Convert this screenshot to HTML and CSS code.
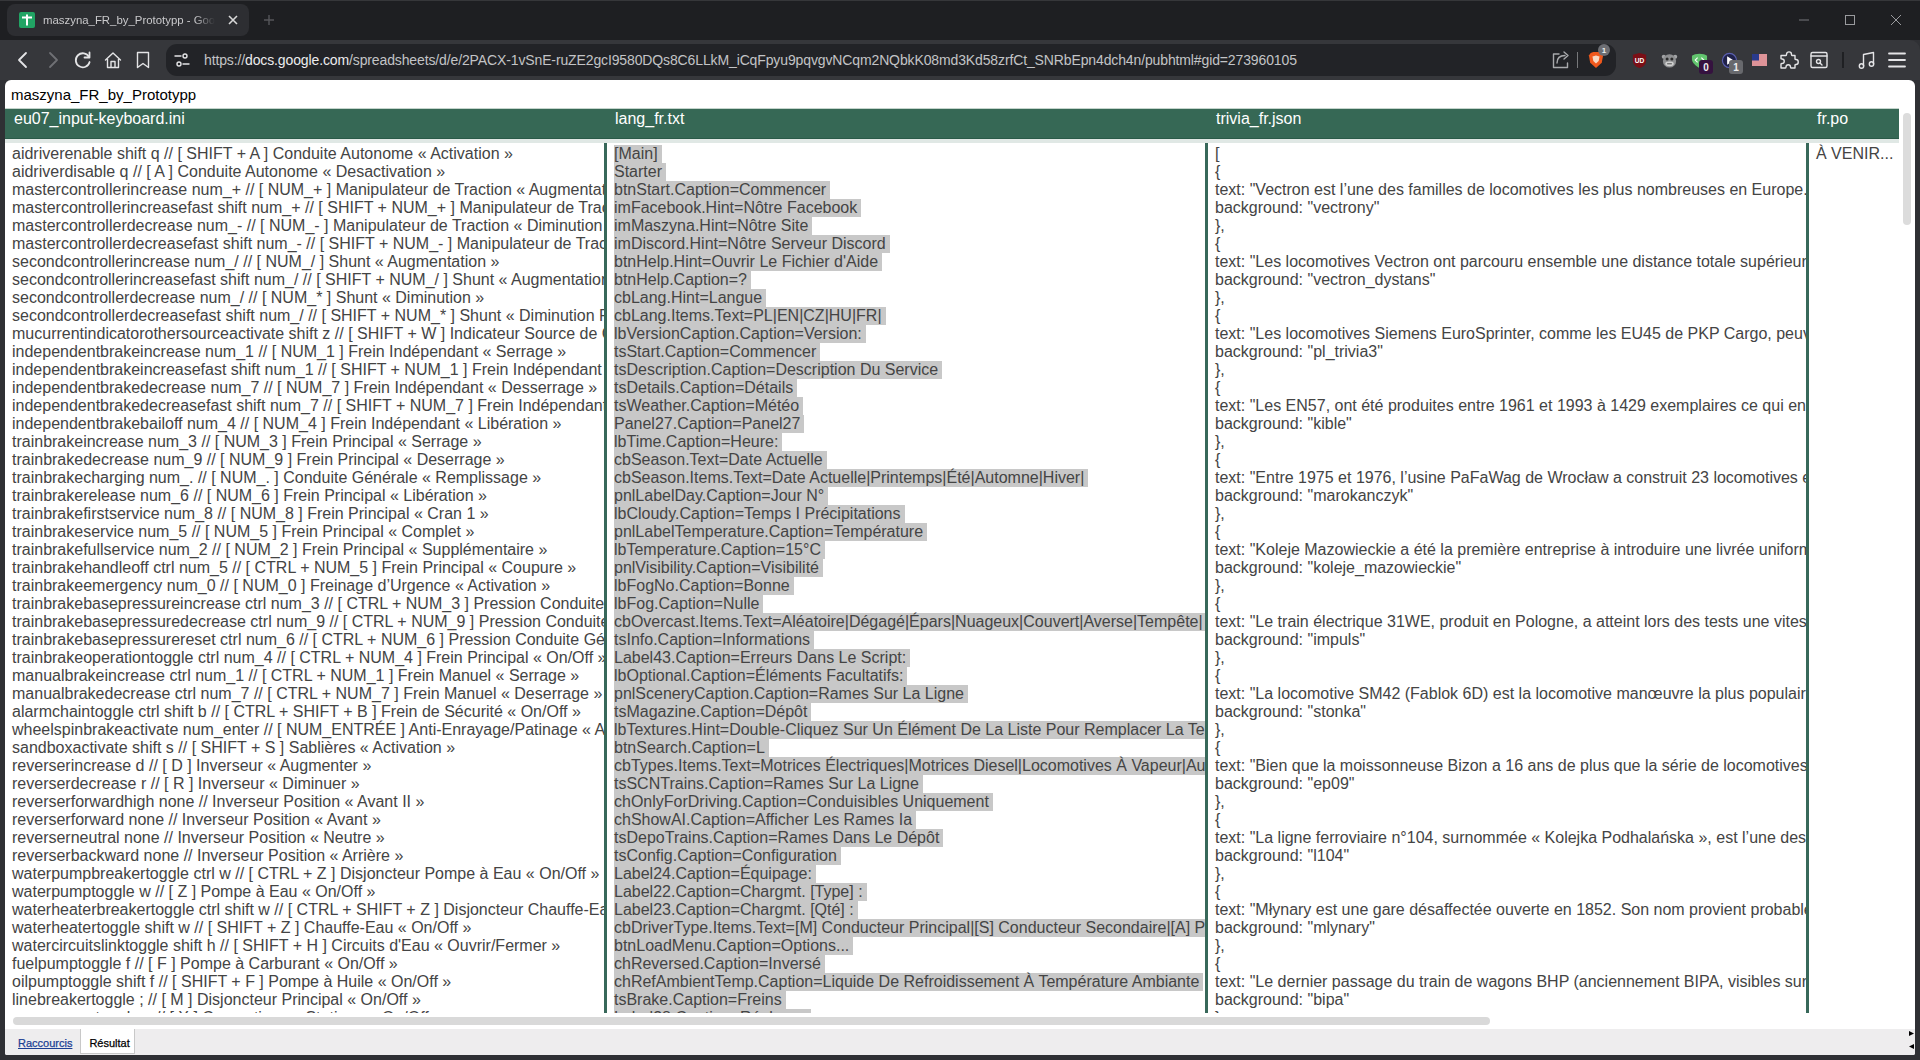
FILE: index.html
```html
<!DOCTYPE html>
<html lang="fr">
<head>
<meta charset="utf-8">
<title>maszyna_FR_by_Prototypp</title>
<link rel="stylesheet" href="styles.css">
</head>
<body>
<div class="tabstrip">
  <div class="tab">
    <svg class="favicon" viewBox="0 0 16 16"><rect width="16" height="16" rx="2" fill="#21a464"/><path d="M3 5.5h10M8 2.5v11" stroke="#fff" stroke-width="2" fill="none"/></svg>
    <span class="tab-title">maszyna_FR_by_Prototypp - Google Sheets</span>
    <svg class="tab-x" viewBox="0 0 12 12"><path d="M2 2l8 8M10 2l-8 8" stroke="#d8d8d8" stroke-width="1.6" fill="none"/></svg>
  </div>
  <svg class="tab-plus" viewBox="0 0 12 12"><path d="M6 1v10M1 6h10" stroke="#55565a" stroke-width="1.4" fill="none"/></svg>
  <div class="winbtns">
    <svg viewBox="0 0 12 12"><path d="M1 6h10" stroke="#77787c" fill="none"/></svg>
    <svg viewBox="0 0 12 12"><rect x="1.5" y="1.5" width="9" height="9" stroke="#9a9b9e" fill="none"/></svg>
    <svg viewBox="0 0 12 12"><path d="M1 1l10 10M11 1L1 11" stroke="#9a9b9e" fill="none"/></svg>
  </div>
</div>
<div class="toolbar">
  <div class="tb-btn"><svg viewBox="0 0 20 20"><path d="M13 3L6 10l7 7" class="ic"/></svg></div>
  <div class="tb-btn"><svg viewBox="0 0 20 20"><path d="M7 3l7 7-7 7" class="ic dim"/></svg></div>
  <div class="tb-btn"><svg viewBox="0 0 20 20"><path d="M16 7a7 7 0 1 0 .6 5" class="ic"/><path d="M16.5 2.5V7.500H11.500" class="ic"/></svg></div>
  <div class="tb-btn"><svg viewBox="0 0 20 20"><path d="M2.500 10L10 3l7.500 7M4.500 9v8.500h11V9M8 17.500V11.500h4v6" class="ic thin"/></svg></div>
  <div class="tb-btn"><svg viewBox="0 0 20 20"><path d="M4.500 2.500h11v15L10 13.500l-5.500 4z" class="ic thin"/></svg></div>
  <div class="address">
    <svg class="settings" viewBox="0 0 16 16"><path d="M1 4h6M9 12h6" class="ic thin"/><circle cx="11" cy="4" r="2" class="ic thin"/><circle cx="5" cy="12" r="2" class="ic thin"/></svg>
    <div class="url">https://<b>docs.google.com</b>/spreadsheets/d/e/2PACX-1vSnE-ruZE2gcI9580DQs8C6LLkM_iCqFpyu9pqvgvNCqm2NQbkK08md3Kd58zrfCt_SNRbEpn4dch4n/pubhtml#gid=273960105</div>
    <svg class="share" viewBox="0 0 18 18"><path d="M7 3H1.500v13.500h14V12" class="ic thin dimmer"/><path d="M5 12c0-5 3-7.500 8-7.500M12 1l4 3.500-4 3.500" class="ic thin dimmer"/></svg>
    <span class="addr-sep"></span>
    <div class="brave">
      <svg viewBox="0 0 18 20"><path d="M3 2l3-1h6l3 1 2 3-1.500 8L9 19 2.500 13 1 5z" fill="#f0581c"/><path d="M5 6l4-1 4 1-1 5-3 3-3-3z" fill="#f8d9c4"/></svg>
      <span class="badge badge-grey-round">1</span>
    </div>
  </div>
  <div class="tb-btn ext"><svg viewBox="0 0 18 18"><path d="M9 1l7 2v6c0 4-3 7-7 8-4-1-7-4-7-8V3z" fill="#7b0f16"/><text x="9" y="11.500" class="ub">UD</text></svg></div>
  <div class="tb-btn ext"><svg viewBox="0 0 18 18"><circle cx="3" cy="5" r="2.200" fill="#a3a4a6"/><circle cx="15" cy="5" r="2.200" fill="#a3a4a6"/><circle cx="9" cy="9.500" r="7" fill="#8f9092"/><circle cx="6.500" cy="7.500" r="1.600" fill="#2c2c2c"/><circle cx="11.500" cy="7.500" r="1.600" fill="#2c2c2c"/><ellipse cx="9" cy="12.500" rx="4.500" ry="2.500" fill="#d0d0d0"/><path d="M6.500 12.500h5" stroke="#444" stroke-width="1"/></svg></div>
  <div class="tb-btn ext">
    <svg viewBox="0 0 18 18"><path d="M1 4c3-3 13-3 16 0v4c0 3-4 7-8 9-4-2-8-6-8-9z" fill="#62c56e"/><path d="M7 6L4.500 8.500 7 11M11 6l2.500 2.500L11 11" stroke="#fff" stroke-width="1.200" fill="none"/></svg>
    <span class="badge badge-purple">0</span>
  </div>
  <div class="tb-btn ext">
    <svg viewBox="0 0 18 18"><circle cx="9" cy="9" r="7.500" fill="#20224a" stroke="#5b60b0" stroke-width="1.200"/><path d="M6.500 4.500l7 4.500-7 4.500z" fill="#fff"/></svg>
    <span class="badge badge-grey">1</span>
  </div>
  <div class="tb-btn ext"><svg class="flag" viewBox="0 0 15 12"><rect width="15" height="12" fill="#f4f4f4"/><path d="M0 1h15M0 3h15M0 5h15M0 7h15M0 9h15M0 11h15" stroke="#c8323c"/><rect width="7" height="6.500" fill="#2a3a8c"/></svg></div>
  <div class="tb-btn"><svg viewBox="0 0 20 20"><path d="M7.500 4.500c0-3.500 5-3.500 5 0 0 .5 0 1 .5 1h3v3.500c0 .5.500.5 1 .5 3 0 3 5 0 5-.5 0-1 0-1 .5v3h-4c-.5 0-.5-.5-.5-1 0-3-4.500-3-4.500 0 0 .5 0 1-.5 1H2v-4c0-.5.500-.5 1-.5 3 0 3-4.500 0-4.500-.5 0-1 0-1-.5V5.500h5c.5 0 .5-.5.500-1z" class="ic thin"/></svg></div>
  <div class="tb-btn"><svg viewBox="0 0 20 20"><rect x="2" y="2.500" width="16" height="15" rx="1.500" class="ic thin"/><path d="M2 6h16" class="ic thin"/><circle cx="9.500" cy="11.500" r="2" class="ic thin"/><path d="M11 13l2 2" class="ic thin"/></svg></div>
  <span class="tb-sep"></span>
  <div class="tb-btn"><svg viewBox="0 0 20 20"><path d="M6.500 16V4.500l10-2V14" class="ic thin"/><circle cx="4.500" cy="16" r="2.200" class="ic thin"/><circle cx="14.500" cy="14" r="2.200" class="ic thin"/></svg></div>
  <div class="tb-btn"><svg viewBox="0 0 20 20"><path d="M2 3.500h16M2 10h16M2 16.500h16" class="ic"/></svg></div>
</div>
<main class="page">
  <div class="doc-title">maszyna_FR_by_Prototypp</div>
  <div class="sheet">
    <div class="grid head">
      <div class="hcell">eu07_input-keyboard.ini</div>
      <div class="hcell">lang_fr.txt</div>
      <div class="hcell">trivia_fr.json</div>
      <div class="hcell">fr.po</div>
    </div>
    <div class="strip"></div>
    <div class="grid body">
      <div class="cell first">
        <div>aidriverenable shift q // [ SHIFT + A ] Conduite Autonome « Activation »</div>
        <div>aidriverdisable q // [ A ] Conduite Autonome « Desactivation »</div>
        <div>mastercontrollerincrease num_+ // [ NUM_+ ] Manipulateur de Traction « Augmentation »</div>
        <div>mastercontrollerincreasefast shift num_+ // [ SHIFT + NUM_+ ] Manipulateur de Traction « Augmentation Rapide »</div>
        <div>mastercontrollerdecrease num_- // [ NUM_- ] Manipulateur de Traction « Diminution »</div>
        <div>mastercontrollerdecreasefast shift num_- // [ SHIFT + NUM_- ] Manipulateur de Traction « Diminution Rapide »</div>
        <div>secondcontrollerincrease num_/ // [ NUM_/ ] Shunt « Augmentation »</div>
        <div>secondcontrollerincreasefast shift num_/ // [ SHIFT + NUM_/ ] Shunt « Augmentation Rapide »</div>
        <div>secondcontrollerdecrease num_/ // [ NUM_* ] Shunt « Diminution »</div>
        <div>secondcontrollerdecreasefast shift num_/ // [ SHIFT + NUM_* ] Shunt « Diminution Rapide »</div>
        <div>mucurrentindicatorothersourceactivate shift z // [ SHIFT + W ] Indicateur Source de Courant</div>
        <div>independentbrakeincrease num_1 // [ NUM_1 ] Frein Indépendant « Serrage »</div>
        <div>independentbrakeincreasefast shift num_1 // [ SHIFT + NUM_1 ] Frein Indépendant « Serrage Rapide »</div>
        <div>independentbrakedecrease num_7 // [ NUM_7 ] Frein Indépendant « Desserrage »</div>
        <div>independentbrakedecreasefast shift num_7 // [ SHIFT + NUM_7 ] Frein Indépendant « Desserrage Rapide »</div>
        <div>independentbrakebailoff num_4 // [ NUM_4 ] Frein Indépendant « Libération »</div>
        <div>trainbrakeincrease num_3 // [ NUM_3 ] Frein Principal « Serrage »</div>
        <div>trainbrakedecrease num_9 // [ NUM_9 ] Frein Principal « Deserrage »</div>
        <div>trainbrakecharging num_. // [ NUM_. ] Conduite Générale « Remplissage »</div>
        <div>trainbrakerelease num_6 // [ NUM_6 ] Frein Principal « Libération »</div>
        <div>trainbrakefirstservice num_8 // [ NUM_8 ] Frein Principal « Cran 1 »</div>
        <div>trainbrakeservice num_5 // [ NUM_5 ] Frein Principal « Complet »</div>
        <div>trainbrakefullservice num_2 // [ NUM_2 ] Frein Principal « Supplémentaire »</div>
        <div>trainbrakehandleoff ctrl num_5 // [ CTRL + NUM_5 ] Frein Principal « Coupure »</div>
        <div>trainbrakeemergency num_0 // [ NUM_0 ] Freinage d’Urgence « Activation »</div>
        <div>trainbrakebasepressureincrease ctrl num_3 // [ CTRL + NUM_3 ] Pression Conduite Générale</div>
        <div>trainbrakebasepressuredecrease ctrl num_9 // [ CTRL + NUM_9 ] Pression Conduite Générale</div>
        <div>trainbrakebasepressurereset ctrl num_6 // [ CTRL + NUM_6 ] Pression Conduite Générale</div>
        <div>trainbrakeoperationtoggle ctrl num_4 // [ CTRL + NUM_4 ] Frein Principal « On/Off »</div>
        <div>manualbrakeincrease ctrl num_1 // [ CTRL + NUM_1 ] Frein Manuel « Serrage »</div>
        <div>manualbrakedecrease ctrl num_7 // [ CTRL + NUM_7 ] Frein Manuel « Deserrage »</div>
        <div>alarmchaintoggle ctrl shift b // [ CTRL + SHIFT + B ] Frein de Sécurité « On/Off »</div>
        <div>wheelspinbrakeactivate num_enter // [ NUM_ENTRÉE ] Anti-Enrayage/Patinage « Activation »</div>
        <div>sandboxactivate shift s // [ SHIFT + S ] Sablières « Activation »</div>
        <div>reverserincrease d // [ D ] Inverseur « Augmenter »</div>
        <div>reverserdecrease r // [ R ] Inverseur « Diminuer »</div>
        <div>reverserforwardhigh none // Inverseur Position « Avant II »</div>
        <div>reverserforward none // Inverseur Position « Avant »</div>
        <div>reverserneutral none // Inverseur Position « Neutre »</div>
        <div>reverserbackward none // Inverseur Position « Arrière »</div>
        <div>waterpumpbreakertoggle ctrl w // [ CTRL + Z ] Disjoncteur Pompe à Eau « On/Off »</div>
        <div>waterpumptoggle w // [ Z ] Pompe à Eau « On/Off »</div>
        <div>waterheaterbreakertoggle ctrl shift w // [ CTRL + SHIFT + Z ] Disjoncteur Chauffe-Eau « On/Off »</div>
        <div>waterheatertoggle shift w // [ SHIFT + Z ] Chauffe-Eau « On/Off »</div>
        <div>watercircuitslinktoggle shift h // [ SHIFT + H ] Circuits d'Eau « Ouvrir/Fermer »</div>
        <div>fuelpumptoggle f // [ F ] Pompe à Carburant « On/Off »</div>
        <div>oilpumptoggle shift f // [ SHIFT + F ] Pompe à Huile « On/Off »</div>
        <div>linebreakertoggle ; // [ M ] Disjoncteur Principal « On/Off »</div>
        <div>compressortoggle x // [ X ] Convertisseur Statique « On/Off »</div>
      </div>
      <div class="cell selected">
        <div>[Main]</div>
        <div>Starter</div>
        <div>btnStart.Caption=Commencer</div>
        <div>imFacebook.Hint=Nôtre Facebook</div>
        <div>imMaszyna.Hint=Nôtre Site</div>
        <div>imDiscord.Hint=Nôtre Serveur Discord</div>
        <div>btnHelp.Hint=Ouvrir Le Fichier d'Aide</div>
        <div>btnHelp.Caption=?</div>
        <div>cbLang.Hint=Langue</div>
        <div>cbLang.Items.Text=PL|EN|CZ|HU|FR|</div>
        <div>lbVersionCaption.Caption=Version:</div>
        <div>tsStart.Caption=Commencer</div>
        <div>tsDescription.Caption=Description Du Service</div>
        <div>tsDetails.Caption=Détails</div>
        <div>tsWeather.Caption=Météo</div>
        <div>Panel27.Caption=Panel27</div>
        <div>lbTime.Caption=Heure:</div>
        <div>cbSeason.Text=Date Actuelle</div>
        <div>cbSeason.Items.Text=Date Actuelle|Printemps|Été|Automne|Hiver|</div>
        <div>pnlLabelDay.Caption=Jour N°</div>
        <div>lbCloudy.Caption=Temps I Précipitations</div>
        <div>pnlLabelTemperature.Caption=Température</div>
        <div>lbTemperature.Caption=15°C</div>
        <div>pnlVisibility.Caption=Visibilité</div>
        <div>lbFogNo.Caption=Bonne</div>
        <div>lbFog.Caption=Nulle</div>
        <div>cbOvercast.Items.Text=Aléatoire|Dégagé|Épars|Nuageux|Couvert|Averse|Tempête|</div>
        <div>tsInfo.Caption=Informations</div>
        <div>Label43.Caption=Erreurs Dans Le Script:</div>
        <div>lbOptional.Caption=Éléments Facultatifs:</div>
        <div>pnlSceneryCaption.Caption=Rames Sur La Ligne</div>
        <div>tsMagazine.Caption=Dépôt</div>
        <div>lbTextures.Hint=Double-Cliquez Sur Un Élément De La Liste Pour Remplacer La Texture</div>
        <div>btnSearch.Caption=L</div>
        <div>cbTypes.Items.Text=Motrices Électriques|Motrices Diesel|Locomotives À Vapeur|Autres</div>
        <div>tsSCNTrains.Caption=Rames Sur La Ligne</div>
        <div>chOnlyForDriving.Caption=Conduisibles Uniquement</div>
        <div>chShowAI.Caption=Afficher Les Rames Ia</div>
        <div>tsDepoTrains.Caption=Rames Dans Le Dépôt</div>
        <div>tsConfig.Caption=Configuration</div>
        <div>Label24.Caption=Équipage:</div>
        <div>Label22.Caption=Chargmt. [Type] :</div>
        <div>Label23.Caption=Chargmt. [Qté] :</div>
        <div>cbDriverType.Items.Text=[M] Conducteur Principal|[S] Conducteur Secondaire|[A] Passager</div>
        <div>btnLoadMenu.Caption=Options...</div>
        <div>chReversed.Caption=Inversé</div>
        <div>chRefAmbientTemp.Caption=Liquide De Refroidissement À Température Ambiante</div>
        <div>tsBrake.Caption=Freins</div>
        <div>Label38.Caption=Réglages</div>
      </div>
      <div class="cell">
        <div>[</div>
        <div>{</div>
        <div>text: "Vectron est l’une des familles de locomotives les plus nombreuses en Europe.",</div>
        <div>background: "vectrony"</div>
        <div>},</div>
        <div>{</div>
        <div>text: "Les locomotives Vectron ont parcouru ensemble une distance totale supérieure à",</div>
        <div>background: "vectron_dystans"</div>
        <div>},</div>
        <div>{</div>
        <div>text: "Les locomotives Siemens EuroSprinter, comme les EU45 de PKP Cargo, peuvent",</div>
        <div>background: "pl_trivia3"</div>
        <div>},</div>
        <div>{</div>
        <div>text: "Les EN57, ont été produites entre 1961 et 1993 à 1429 exemplaires ce qui en fait",</div>
        <div>background: "kible"</div>
        <div>},</div>
        <div>{</div>
        <div>text: "Entre 1975 et 1976, l’usine PaFaWag de Wrocław a construit 23 locomotives en",</div>
        <div>background: "marokanczyk"</div>
        <div>},</div>
        <div>{</div>
        <div>text: "Koleje Mazowieckie a été la première entreprise à introduire une livrée uniforme",</div>
        <div>background: "koleje_mazowieckie"</div>
        <div>},</div>
        <div>{</div>
        <div>text: "Le train électrique 31WE, produit en Pologne, a atteint lors des tests une vitesse",</div>
        <div>background: "impuls"</div>
        <div>},</div>
        <div>{</div>
        <div>text: "La locomotive SM42 (Fablok 6D) est la locomotive manœuvre la plus populaire",</div>
        <div>background: "stonka"</div>
        <div>},</div>
        <div>{</div>
        <div>text: "Bien que la moissonneuse Bizon a 16 ans de plus que la série de locomotives",</div>
        <div>background: "ep09"</div>
        <div>},</div>
        <div>{</div>
        <div>text: "La ligne ferroviaire n°104, surnommée « Kolejka Podhalańska », est l’une des plus",</div>
        <div>background: "l104"</div>
        <div>},</div>
        <div>{</div>
        <div>text: "Młynary est une gare désaffectée ouverte en 1852. Son nom provient probablement",</div>
        <div>background: "mlynary"</div>
        <div>},</div>
        <div>{</div>
        <div>text: "Le dernier passage du train de wagons BHP (anciennement BIPA, visibles sur la",</div>
        <div>background: "bipa"</div>
        <div>},</div>
      </div>
      <div class="cell last">
        <div>À VENIR...</div>
      </div>
    </div>
    <div class="vbar"></div>
    <div class="hbar"></div>
  </div>
  <div class="sheet-tabs">
    <a class="tab-link" href="#">Raccourcis</a>
    <span class="tab-active">Résultat</span>
    <div class="tab-arrows">
      <svg viewBox="0 0 5 5"><path d="M0 0l5 2.500L0 5z"/></svg>
      <svg viewBox="0 0 5 5"><path d="M5 0L0 2.500 5 5z"/></svg>
    </div>
  </div>
</main>
</body>
</html>
```
FILE: styles.css
```css
* { box-sizing: border-box; }
html, body { margin: 0; height: 100%; }
body {
  height: 1060px;
  overflow: hidden;
  display: flex;
  flex-direction: column;
  background: #2f3034;
  font-family: "Liberation Sans", Arial, sans-serif;
}

/* Browser tab strip */
.tabstrip {
  flex: none;
  height: 40px;
  display: flex;
  align-items: flex-start;
  padding: 3px 0 0 7px;
  background: #1e1f22;
  border-top: 1px solid #36373a;
}
.tab {
  width: 242px;
  height: 32px;
  display: flex;
  align-items: center;
  padding: 0 10px 0 12px;
  background: #2d2e32;
  border-radius: 8px;
}
.favicon { width: 16px; height: 16px; flex: none; }
.tab-title {
  flex: 1;
  min-width: 0;
  margin-left: 8px;
  font-size: 11.4px;
  color: #c9c9cb;
  white-space: nowrap;
  overflow: hidden;
  -webkit-mask-image: linear-gradient(to right, #000 88%, transparent 100%);
  mask-image: linear-gradient(to right, #000 88%, transparent 100%);
}
.tab-x { width: 12px; height: 12px; flex: none; margin-left: 12px; }
.tab-plus { width: 12px; height: 12px; margin: 10px 0 0 14px; }
.winbtns {
  margin-left: auto;
  display: flex;
  gap: 34px;
  padding: 10px 18px 0 0;
}
.winbtns svg { width: 12px; height: 12px; display: block; }

/* Browser toolbar */
.toolbar {
  flex: none;
  height: 40px;
  display: flex;
  align-items: center;
  padding: 0 8px;
  background: #36373b;
  border-radius: 0 10px 0 0;
}
.tb-btn {
  position: relative;
  flex: none;
  width: 30px;
  height: 24px;
  display: flex;
  align-items: center;
  justify-content: center;
}
.tb-btn svg { width: 20px; height: 20px; }
.tb-btn.ext svg { width: 17px; height: 17px; }
.tb-btn.ext svg.flag { width: 15px; height: 12px; }
.ic { fill: none; stroke: #e4e4e6; stroke-width: 1.8; stroke-linecap: round; stroke-linejoin: round; }
.ic.thin { stroke-width: 1.4; }
.ic.dim { stroke: #6f7074; }
.ic.dimmer { stroke: #a8a9ac; }
.ub { font: bold 7px "Liberation Sans", sans-serif; fill: #fff; text-anchor: middle; }
.tb-sep { flex: none; width: 18px; height: 16px; display: flex; justify-content: center; }
.tb-sep::before { content: ""; width: 2px; background: #1f2023; }

.address {
  flex: none;
  width: 1450px;
  height: 32px;
  margin: 0 8px;
  display: flex;
  align-items: center;
  padding: 0 6px 0 8px;
  background: #222327;
  border-radius: 11px;
}
.settings { width: 16px; height: 16px; flex: none; }
.url {
  flex: 1;
  min-width: 0;
  margin-left: 14px;
  font-size: 14px;
  letter-spacing: -0.125px;
  color: #c2c3c6;
  white-space: nowrap;
  overflow: hidden;
}
.url b { font-weight: normal; color: #ececee; }
.share { width: 18px; height: 18px; flex: none; }
.addr-sep { flex: none; width: 1px; height: 16px; margin: 0 10px 0 7px; background: #77787b; }
.brave { position: relative; flex: none; width: 18px; height: 20px; margin-right: 4px; }
.brave svg { width: 16px; height: 20px; display: block; }

.badge {
  position: absolute;
  display: flex;
  align-items: center;
  justify-content: center;
  font-size: 10px;
  font-weight: bold;
  color: #eee;
}
.badge-grey-round { top: -6px; left: 10px; width: 12px; height: 12px; border-radius: 50%; background: #6d6e73; font-size: 8px; }
.badge-purple { top: 12px; left: 15px; width: 14px; height: 14px; border-radius: 3px; background: #35123f; }
.badge-grey { top: 12px; left: 15px; width: 14px; height: 14px; border-radius: 3px; background: #68696d; }

/* Published sheet */
.page {
  flex: 1;
  min-height: 0;
  margin: 0 5px 5px;
  display: flex;
  flex-direction: column;
  background: #fff;
  border-radius: 6px 6px 2px 2px;
  overflow: hidden;
}
.doc-title {
  flex: none;
  height: 28px;
  padding: 6px 0 0 6px;
  font-size: 15px;
  line-height: 18px;
  color: #000;
}
.sheet {
  position: relative;
  flex: 1;
  min-height: 0;
  display: flex;
  flex-direction: column;
  overflow: hidden;
  padding-bottom: 16px;
}
.grid {
  display: grid;
  grid-template-columns: 602px 601px 601px 90px;
  width: 1894px;
}
.head {
  flex: none;
  height: 31px;
  background: #366855;
  border-top: 1px solid #c4d4cc;
  border-bottom: 1px solid #2a5a48;
}
.hcell {
  padding: 1px 0 0 8px;
  font-size: 16px;
  line-height: 18px;
  color: #fff;
  white-space: nowrap;
}
.hcell:first-child { padding-left: 9px; }
.strip { flex: none; height: 4px; width: 1894px; background: #e0e8e5; }
.body { flex: 1; min-height: 0; }
.cell {
  min-width: 0;
  overflow: hidden;
  padding: 2px 0 0 7px;
  border-right: 3px solid #38685a;
  font-size: 16px;
  line-height: 18px;
  color: #444;
  white-space: nowrap;
}
.cell.first { padding-left: 7px; }
.cell.last { border-right: 0; }
.selected > div {
  width: fit-content;
  padding-right: 4px;
  background: #c8c8c8;
}
.vbar {
  position: absolute;
  top: 5px;
  left: 1898px;
  width: 8px;
  height: 112px;
  border-radius: 4px;
  background: #dcdcdc;
}
.hbar {
  position: absolute;
  top: 909px;
  left: 8px;
  width: 1477px;
  height: 8px;
  border-radius: 4px;
  background: #d9d9d9;
}
.sheet-tabs {
  flex: none;
  height: 26px;
  display: flex;
  align-items: flex-start;
  padding-left: 13px;
  background: #eeedee;
  font-size: 11px;
  -webkit-text-stroke: 0.25px;
}
.tab-link { margin-top: 8px; color: #1c3f94; }
.tab-active {
  width: 55px;
  height: 25px;
  margin-left: 8px;
  padding: 8px 0 0 8px;
  background: #fff;
  border: solid #c8c8c8;
  border-width: 0 1px 1px 1px;
  color: #000;
}
.tab-arrows {
  margin-left: auto;
  display: flex;
  flex-direction: column;
  gap: 8px;
  padding: 2px 1px 0 0;
}
.tab-arrows svg { width: 5px; height: 5px; display: block; }
```
